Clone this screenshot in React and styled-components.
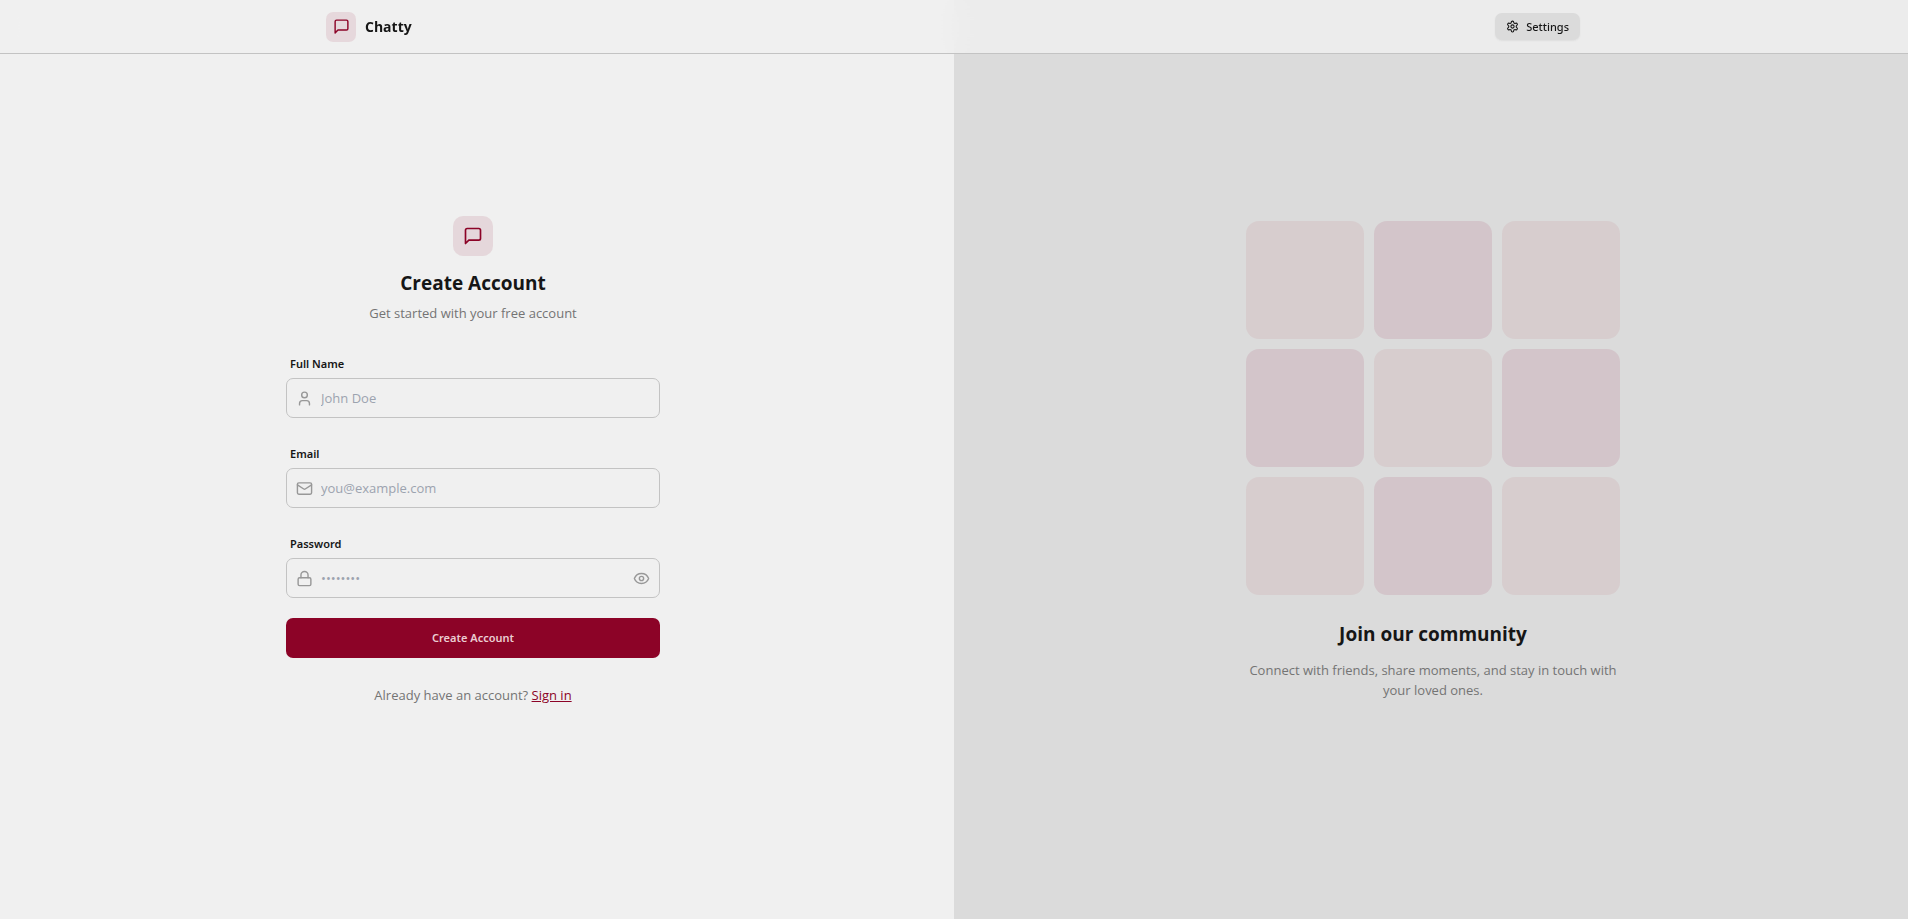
import React, { useState } from "react";
import styled, { createGlobalStyle, ThemeProvider } from "styled-components";

const theme = {
  base: "#f0f0f0",
  panel: "#dbdbdb",
  ink: "#161616",
  primary: "#8c0327",
  tint: "rgba(140, 3, 39, 0.1)",
  line: "#c3c3c3",
  labelFont: `"Noto Sans", "Open Sans", sans-serif`,
};

const GlobalStyle = createGlobalStyle`
  *, *::before, *::after { box-sizing: border-box; }
  body {
    margin: 0;
    background: ${theme.base};
    color: ${theme.ink};
    font-family: "Segoe UI", "Open Sans", "Noto Sans", sans-serif;
    font-size: 13px;
    line-height: 20px;
  }
  h1, h2, p { margin: 0; }
  button, input { font: inherit; color: inherit; }
`;

const Header = styled.header`
  position: fixed;
  inset: 0 0 auto 0;
  z-index: 10;
  border-bottom: 1px solid ${(p) => p.theme.line};
  background: rgba(240, 240, 240, 0.8);
  backdrop-filter: blur(14px);
`;

const HeaderInner = styled.div`
  max-width: 1280px;
  height: 53px;
  margin: 0 auto;
  padding: 0 14px 0 12px;
  display: flex;
  align-items: center;
  justify-content: space-between;
`;

const Brand = styled.a`
  display: flex;
  align-items: center;
  gap: 9px;
  color: inherit;
  text-decoration: none;
`;

const BrandName = styled.span`
  font-size: 14px;
  font-weight: 700;
`;

const LogoBox = styled.span`
  width: ${(p) => p.$size}px;
  height: ${(p) => p.$size}px;
  border-radius: ${(p) => (p.$size > 30 ? 10 : 7)}px;
  display: flex;
  align-items: center;
  justify-content: center;
  background: ${(p) => p.theme.tint};
  color: ${(p) => p.theme.primary};
`;

const SettingsButton = styled.button`
  height: 27px;
  padding: 0 11px;
  display: flex;
  align-items: center;
  gap: 7px;
  border: 0;
  border-radius: 7px;
  background: ${(p) => p.theme.panel};
  box-shadow: 0 1px 2px rgba(0, 0, 0, 0.06);
  font-family: ${(p) => p.theme.labelFont};
  font-size: 11px;
  font-weight: 500;
  cursor: pointer;
`;

const Page = styled.main`
  min-height: 100vh;
  display: grid;
  grid-template-columns: 1fr 1fr;
`;

const FormPane = styled.section`
  display: flex;
  align-items: center;
  justify-content: center;
  padding: 41px 48px 40px 40px;
`;

const ArtPane = styled.section`
  display: flex;
  align-items: center;
  justify-content: center;
  padding: 41px 40px 40px 44px;
  background: ${(p) => p.theme.panel};
`;

const Column = styled.div`
  width: 100%;
  max-width: 374px;
  text-align: center;
`;

const Intro = styled.div`
  display: flex;
  flex-direction: column;
  align-items: center;
  margin-bottom: 25px;
`;

const Title = styled.h1`
  margin: 13px 0 6px;
  font-size: 19px;
  line-height: 28px;
  font-weight: 700;
`;

const Muted = styled.p`
  color: #747474;
`;

const Form = styled.form`
  display: flex;
  flex-direction: column;
  gap: 20px;
  margin-bottom: 27px;
`;

const Field = styled.div`
  display: flex;
  flex-direction: column;
  text-align: left;
`;

const Label = styled.label`
  padding: 6px 4px 4px;
  font-family: ${(p) => p.theme.labelFont};
  font-size: 11px;
  font-weight: 600;
`;

const InputBox = styled.div`
  height: 40px;
  display: flex;
  align-items: center;
  gap: 8px;
  padding: 1px 9px 0;
  border: 1px solid ${(p) => p.theme.line};
  border-radius: 7px;
  color: #989898;
`;

const Input = styled.input`
  flex: 1;
  min-width: 0;
  height: 36px;
  padding: 0;
  border: 0;
  outline: 0;
  background: transparent;
  color: ${(p) => p.theme.ink};
  &::placeholder { color: #9ca3af; opacity: 1; }
`;

const IconButton = styled.button`
  display: flex;
  padding: 0;
  border: 0;
  background: transparent;
  cursor: pointer;
`;

const SubmitButton = styled.button`
  height: 40px;
  border: 0;
  border-radius: 7px;
  background: ${(p) => p.theme.primary};
  color: #ebcdd2;
  font-family: ${(p) => p.theme.labelFont};
  font-size: 11px;
  font-weight: 600;
  cursor: pointer;
`;

const TextLink = styled.a`
  color: ${(p) => p.theme.primary};
  text-decoration: underline;
`;

const Tiles = styled.div`
  display: grid;
  grid-template-columns: repeat(3, 1fr);
  gap: 10px;
  margin-bottom: 25px;
`;

const Tile = styled.div`
  aspect-ratio: 1;
  border-radius: 13px;
  background: ${(p) => (p.$faded ? "#d7cdce" : "#d3c5ca")};
`;

const ArtTitle = styled.h2`
  margin-bottom: 12px;
  font-size: 19px;
  line-height: 28px;
  font-weight: 700;
`;

const Svg = styled.svg`
  flex: none;
  fill: none;
  stroke: currentColor;
  stroke-width: 2;
  stroke-linecap: round;
  stroke-linejoin: round;
`;

const Icon = ({ size = 17, children }) => (
  <Svg width={size} height={size} viewBox="0 0 24 24" aria-hidden="true">
    {children}
  </Svg>
);

const MessageIcon = ({ size }) => (
  <Icon size={size}>
    <path d="M21 15a2 2 0 0 1-2 2H7l-4 4V5a2 2 0 0 1 2-2h14a2 2 0 0 1 2 2z" />
  </Icon>
);

const GearIcon = () => (
  <Icon size={13}>
    <path d="M12.22 2h-.44a2 2 0 0 0-2 2v.18a2 2 0 0 1-1 1.73l-.43.25a2 2 0 0 1-2 0l-.15-.08a2 2 0 0 0-2.73.73l-.22.38a2 2 0 0 0 .73 2.73l.15.1a2 2 0 0 1 1 1.72v.51a2 2 0 0 1-1 1.74l-.15.09a2 2 0 0 0-.73 2.73l.22.38a2 2 0 0 0 2.73.73l.15-.08a2 2 0 0 1 2 0l.43.25a2 2 0 0 1 1 1.73V20a2 2 0 0 0 2 2h.44a2 2 0 0 0 2-2v-.18a2 2 0 0 1 1-1.73l.43-.25a2 2 0 0 1 2 0l.15.08a2 2 0 0 0 2.73-.73l.22-.39a2 2 0 0 0-.73-2.73l-.15-.08a2 2 0 0 1-1-1.74v-.5a2 2 0 0 1 1-1.74l.15-.09a2 2 0 0 0 .73-2.73l-.22-.38a2 2 0 0 0-2.73-.73l-.15.08a2 2 0 0 1-2 0l-.43-.25a2 2 0 0 1-1-1.73V4a2 2 0 0 0-2-2z" />
    <circle cx="12" cy="12" r="3" />
  </Icon>
);

const UserIcon = () => (
  <Icon>
    <path d="M19 21v-2a4 4 0 0 0-4-4H9a4 4 0 0 0-4 4v2" />
    <circle cx="12" cy="7" r="4" />
  </Icon>
);

const MailIcon = () => (
  <Icon>
    <rect x="2" y="4" width="20" height="16" rx="2" />
    <path d="m22 7-8.97 5.7a1.94 1.94 0 0 1-2.06 0L2 7" />
  </Icon>
);

const LockIcon = () => (
  <Icon>
    <rect x="3" y="11" width="18" height="11" rx="2" />
    <path d="M7 11V7a5 5 0 0 1 10 0v4" />
  </Icon>
);

const EyeIcon = () => (
  <Icon>
    <path d="M2.062 12.348a1 1 0 0 1 0-.696 10.75 10.75 0 0 1 19.876 0 1 1 0 0 1 0 .696 10.75 10.75 0 0 1-19.876 0" />
    <circle cx="12" cy="12" r="3" />
  </Icon>
);

const fields = [
  { id: "name", label: "Full Name", type: "text", placeholder: "John Doe", icon: UserIcon },
  { id: "email", label: "Email", type: "email", placeholder: "you@example.com", icon: MailIcon },
  { id: "password", label: "Password", type: "password", placeholder: "••••••••", icon: LockIcon },
];

export default function App() {
  const [visible, setVisible] = useState(false);

  return (
    <ThemeProvider theme={theme}>
      <GlobalStyle />
      <Header>
        <HeaderInner>
          <Brand href="#">
            <LogoBox $size={30}>
              <MessageIcon size={17} />
            </LogoBox>
            <BrandName>Chatty</BrandName>
          </Brand>
          <SettingsButton type="button">
            <GearIcon />
            Settings
          </SettingsButton>
        </HeaderInner>
      </Header>
      <Page>
        <FormPane>
          <Column>
            <Intro>
              <LogoBox $size={40}>
                <MessageIcon size={20} />
              </LogoBox>
              <Title>Create Account</Title>
              <Muted>Get started with your free account</Muted>
            </Intro>
            <Form onSubmit={(e) => e.preventDefault()}>
              {fields.map(({ id, label, type, placeholder, icon: FieldIcon }) => (
                <Field key={id}>
                  <Label htmlFor={id}>{label}</Label>
                  <InputBox>
                    <FieldIcon />
                    <Input
                      id={id}
                      type={type === "password" && visible ? "text" : type}
                      placeholder={placeholder}
                    />
                    {type === "password" && (
                      <IconButton
                        type="button"
                        aria-label="Show password"
                        onClick={() => setVisible(!visible)}
                      >
                        <EyeIcon />
                      </IconButton>
                    )}
                  </InputBox>
                </Field>
              ))}
              <SubmitButton type="submit">Create Account</SubmitButton>
            </Form>
            <Muted>
              Already have an account? <TextLink href="#">Sign in</TextLink>
            </Muted>
          </Column>
        </FormPane>
        <ArtPane>
          <Column>
            <Tiles>
              {Array.from({ length: 9 }, (_, i) => (
                <Tile key={i} $faded={i % 2 === 0} />
              ))}
            </Tiles>
            <ArtTitle>Join our community</ArtTitle>
            <Muted>
              Connect with friends, share moments, and stay in touch with your loved ones.
            </Muted>
          </Column>
        </ArtPane>
      </Page>
    </ThemeProvider>
  );
}
